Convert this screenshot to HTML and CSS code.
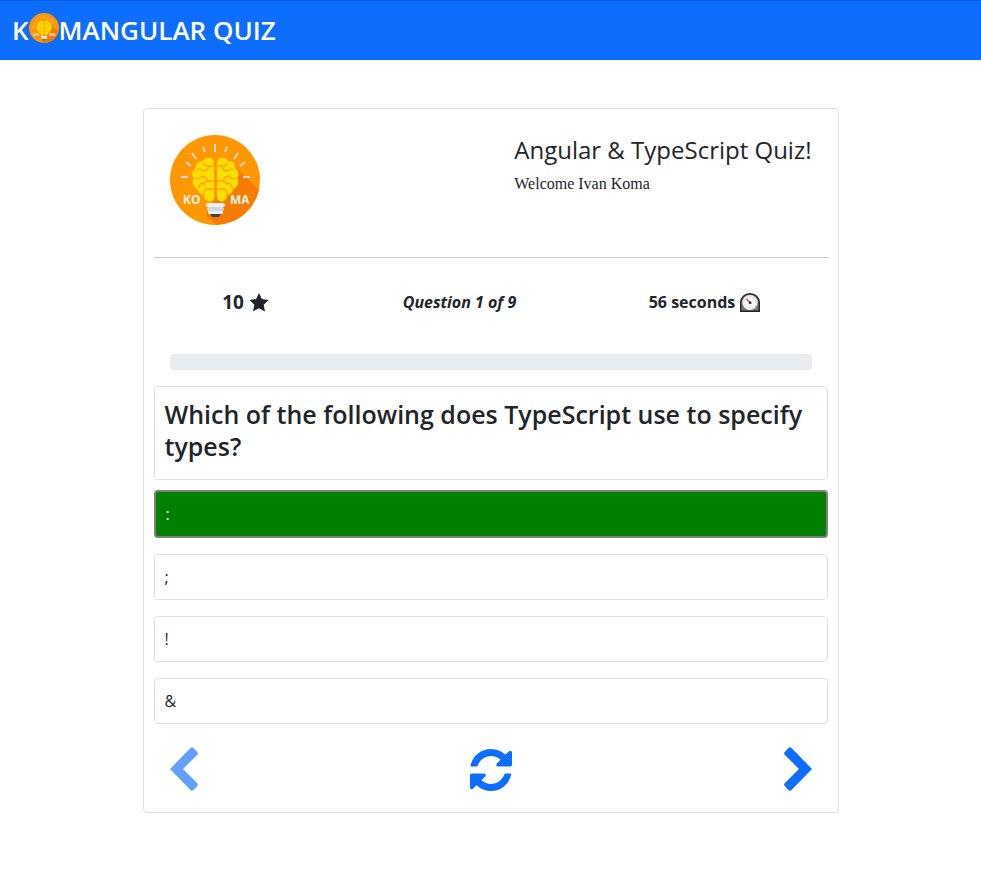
FILE: index.html
```html
<!DOCTYPE html>
<html lang="en">
<head>
<meta charset="utf-8">
<meta name="viewport" content="width=device-width, initial-scale=1">
<title>Komangular Quiz</title>
<link rel="stylesheet" href="styles.css">
</head>
<body>
<svg class="defs" aria-hidden="true">
  <defs>
    <clipPath id="disc"><circle cx="45" cy="45" r="45"/></clipPath>
    <symbol id="logo" viewBox="0 0 90 90">
      <g clip-path="url(#disc)">
        <rect width="90" height="90" fill="#ff9800"/>
        <path d="M64 30L96 62V96H52L36 80Z" fill="#f57c00"/>
        <g stroke="#cfd8dc" stroke-width="2" fill="none">
          <path d="M45 9v8M33 12l2 5M22 18l4 6M16 27l5 4M11 42h7M57 12l-2 5M68 18l-4 6M75 27l-5 4M80 42h-7"/>
        </g>
        <path d="M44 27C43 22 36 21 33 26C28 26 25 29 26 33C22 36 21 40 24 43C21 48 24 53 28 54C28 58 32 60 34 60C34 67 42 69 44 63Z" fill="#ffdd00"/>
        <path d="M47 27C48 22 55 21 58 26C63 26 66 29 65 33C69 36 70 40 67 43C70 48 67 53 63 54C63 58 59 60 57 60C57 67 49 69 47 63Z" fill="#ffdd00"/>
        <g stroke="#ffa500" stroke-width="1.3" fill="none" stroke-linecap="round">
          <path d="M44 31h-5q-1 5-6 5M27 35q4-2 6 1M34 28q1 4 5 3M24 43q6 2 8-2q5 1 6 5q-3 0-4 4M38 46h6M29 53q0-5 5-5M34 60q-1-5 4-6h6"/>
          <path d="M47 31h5q1 5 6 5M64 35q-4-2-6 1M57 28q-1 4-5 3M67 43q-6 2-8-2q-5 1-6 5q3 0 4 4M53 46h-6M62 53q0-5-5-5M57 60q1-5-4-6h-6"/>
        </g>
        <path d="M39 77h13l-3 5h-7z" fill="#37474f"/>
        <rect x="36" y="68" width="19" height="4" rx="2" fill="#eceff1"/>
        <rect x="37" y="72" width="17" height="4" rx="2" fill="#cfd8dc"/>
        <rect x="38" y="76" width="15" height="3" rx="1" fill="#eceff1"/>
        <g class="logo-text"><text x="13" y="69">KO</text><text x="60" y="69">MA</text></g>
      </g>
    </symbol>
    <symbol id="chevron" viewBox="0 0 28 44">
      <path d="M0 22L20.5 1Q22-.3 23.5 1L27.3 5Q28.5 6.3 27.3 7.7L13 22L27.3 36.3Q28.5 37.7 27.3 39L23.5 43Q22 44.3 20.5 43Z" fill="currentColor"/>
    </symbol>
  </defs>
</svg>

<header class="navbar">
  <a class="brand" href="#">K<svg class="brand-logo" role="img" aria-label="O"><use href="#logo"/></svg>MANGULAR QUIZ</a>
</header>

<main class="container">
  <section class="card">
    <div class="intro">
      <svg class="logo" role="img" aria-label="Koma"><use href="#logo"/></svg>
      <div>
        <h1 class="title">Angular &amp; TypeScript Quiz!</h1>
        <p class="welcome">Welcome Ivan Koma</p>
      </div>
    </div>

    <div class="stats">
      <p class="points">10
        <svg class="star" viewBox="0 0 20 19" aria-hidden="true"><path d="M10 0L12.9 6.1L19.6 7L14.7 11.7L16 18.4L10 15.2L4 18.4L5.3 11.7L.4 7L7.1 6.1Z" fill="currentColor"/></svg>
      </p>
      <p class="count">Question 1 of 9</p>
      <p class="time">56 seconds
        <svg class="clock" viewBox="0 0 20 19" aria-hidden="true">
          <path d="M.7 18.3V9.5a9.3 8.8 0 0 1 18.6 0v8.8z" fill="#777" stroke="#252525" stroke-width="1.4"/>
          <circle cx="10" cy="9.5" r="7.6" fill="#fafafa"/>
          <circle cx="10" cy="9.5" r="6" fill="none" stroke="#bbb" stroke-width="1" stroke-dasharray="1 2.1"/>
          <path d="M10 9.5L6.5 6" stroke="#e03a20" stroke-width="1.3"/>
          <circle cx="10.2" cy="9.7" r="1.3" fill="#222"/>
        </svg>
      </p>
    </div>

    <div class="progress" role="progressbar" aria-label="Quiz progress" aria-valuemin="0" aria-valuemax="100" aria-valuenow="0"></div>

    <h2 class="question">Which of the following does TypeScript use to specify types?</h2>

    <div class="options">
      <button class="option correct" type="button">:</button>
      <button class="option" type="button">;</button>
      <button class="option" type="button">!</button>
      <button class="option" type="button">&amp;</button>
    </div>

    <div class="controls">
      <button class="control" type="button" aria-label="Previous question" disabled><svg class="chevron"><use href="#chevron"/></svg></button>
      <button class="control" type="button" aria-label="Restart quiz">
        <svg class="refresh" viewBox="0 0 1536 1536"><path fill="currentColor" d="M1511 928q0 5-1 7-64 268-268 434.500t-478 166.500q-146 0-282.500-55t-243.500-157l-129 129q-19 19-45 19t-45-19-19-45v-448q0-26 19-45t45-19h448q26 0 45 19t19 45-19 45l-137 137q71 66 161 102t187 36q134 0 250-65t186-179q11-17 53-117 8-23 30-23h192q13 0 22.500 9.500t9.500 22.500zm25-800v448q0 26-19 45t-45 19h-448q-26 0-45-19t-19-45 19-45l138-138q-148-137-349-137-134 0-250 65t-186 179q-11 17-53 117-8 23-30 23h-199q-13 0-22.500-9.500t-9.500-22.500v-7q65-268 270-434.500t480-166.500q146 0 284 55.500t245 156.500l130-129q19-19 45-19t45 19 19 45z"/></svg>
      </button>
      <button class="control" type="button" aria-label="Next question"><svg class="chevron next"><use href="#chevron"/></svg></button>
    </div>
  </section>
</main>
</body>
</html>
```
FILE: styles.css
```css
* { box-sizing: border-box; }

body {
  margin: 0;
  background: #fff;
  color: #212529;
  font-family: "Segoe UI", "Open Sans", sans-serif;
  font-size: 16px;
  line-height: 24px;
}

h1, h2, p { margin: 0; }
button { font: inherit; cursor: pointer; }

.defs { position: absolute; width: 0; height: 0; }
.logo-text { font: 700 12px "Open Sans", sans-serif; fill: #e8f0e4; }

.navbar {
  display: flex;
  align-items: center;
  height: 60px;
  padding: 0 12px 2px;
  background: #0d6efd;
  border-top: 1px solid #0b62e4;
}

.brand {
  display: flex;
  align-items: center;
  color: #fff;
  font-size: 26px;
  font-weight: 600;
  line-height: 32px;
  text-decoration: none;
}
.brand-logo { width: 30px; height: 30px; margin-bottom: 4px; }

.container {
  max-width: 720px;
  margin: 48px auto;
  padding: 0 12px;
}

.card {
  padding: 10px;
  border: 1px solid #dfdfdf;
  border-radius: 4px;
}

.intro {
  display: flex;
  justify-content: space-between;
  height: 139px;
  padding: 16px;
  border-bottom: 1px solid #c8c9ca;
}
.logo { width: 90px; height: 90px; }
.title {
  margin: 0 0 8px;
  font-family: "Comic Sans MS", "Open Sans", sans-serif;
  font-size: 24px;
  font-weight: 400;
  line-height: 29px;
}
.welcome { font-family: "Liberation Serif", serif; }

.stats {
  display: grid;
  grid-template-columns: repeat(3, 1fr);
  align-items: center;
  height: 96px;
  padding: 0 16px 8px;
  text-align: center;
}
.stats p {
  display: flex;
  align-items: center;
  justify-content: center;
  gap: 5px;
  font-weight: 700;
}
.stats .points { padding-right: 62px; font-size: 19px; }
.stats .count { padding-right: 62px; font-style: italic; }
.star { width: 20px; height: 19px; }
.clock { width: 20px; height: 19px; }

.progress {
  height: 16px;
  margin: 0 16px 16px;
  background: #e9ecef;
  border-radius: 4px;
}

.question {
  min-height: 94px;
  padding: 11px 10px;
  border: 1px solid #dfdfdf;
  border-radius: 4px;
  font-size: 25px;
  font-weight: 600;
  line-height: 32px;
}

.options {
  display: grid;
  gap: 16px;
  margin-top: 10px;
}
.option {
  min-height: 46px;
  padding: 10px;
  border: 1px solid #dfdfdf;
  border-radius: 4px;
  background: #fff;
  color: #212529;
  text-align: left;
}
.option.correct {
  min-height: 48px;
  border: 2px solid #808080;
  background: #008000;
  color: #fff;
}

.controls {
  display: flex;
  justify-content: space-between;
  align-items: center;
  height: 78px;
  padding: 12px 16px 0;
}
.control {
  display: flex;
  padding: 0;
  border: 0;
  background: none;
  color: #0d6efd;
}
.control:disabled { opacity: 0.65; cursor: default; }
.chevron { width: 28px; height: 44px; }
.chevron.next { transform: rotate(180deg); }
.refresh { width: 42px; height: 42px; margin-top: 2px; }
```
